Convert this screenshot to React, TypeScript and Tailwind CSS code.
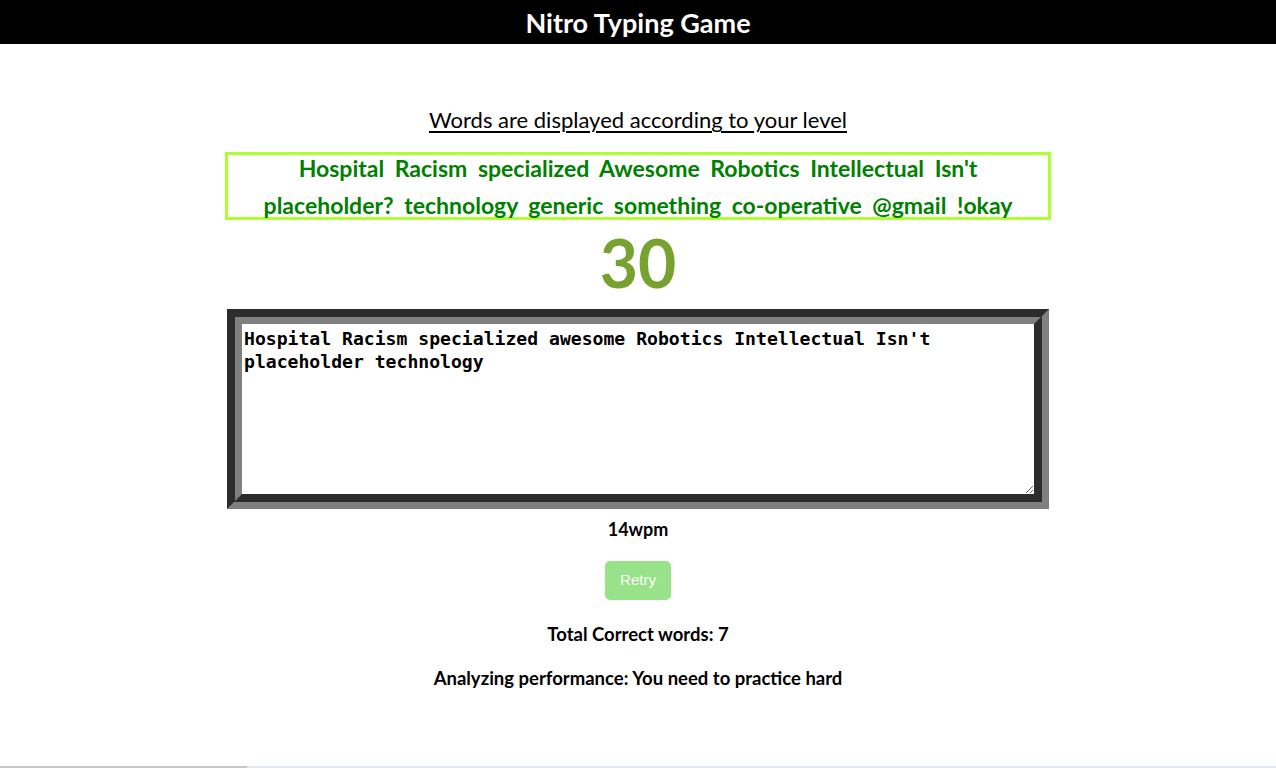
import { useState } from 'react';

const words =
  "Hospital Racism specialized Awesome Robotics Intellectual Isn't placeholder? technology generic something co-operative @gmail !okay";

export default function App() {
  const [typed, setTyped] = useState(
    "Hospital Racism specialized awesome Robotics Intellectual Isn't placeholder technology"
  );

  return (
    <div className="min-h-screen flex flex-col bg-white text-black font-['Lato','Open_Sans',sans-serif]">
      <header className="h-[44px] bg-black flex items-center justify-center">
        <h1 className="text-white text-[27px] font-bold leading-none">Nitro Typing Game</h1>
      </header>

      <main className="flex-1 flex flex-col items-center">
        <h2 className="mt-[63px] text-[22px] leading-[26px] underline underline-offset-[3px] decoration-[2px]">
          Words are displayed according to your level
        </h2>

        {/* word list overflows its fixed-height box a little, like the original */}
        <div className="mt-[19px] w-[826px] h-[68px] border-[3px] border-[#adff2f] px-[30px]">
          <p className="-mt-[5px] text-center text-[#008000] font-bold text-[23px] leading-[37px] [word-spacing:5px]">
            {words}
          </p>
        </div>

        <div className="mt-[3px] text-[#78a22f] font-bold text-[66px] leading-[80px]">30</div>

        <textarea
          value={typed}
          onChange={(e) => setTyped(e.target.value)}
          className="mt-[6px] w-[822px] h-[200px] border-[15px] [border-style:groove] border-[#808080] bg-white px-[2px] pt-[3px] pb-[2px] font-['DejaVu_Sans_Mono',monospace] font-bold text-[18.1px] leading-[23px] text-black outline-none"
        />

        <div className="mt-[10px] font-bold text-[18px] leading-[20px]">14wpm</div>

        <button
          type="button"
          className="mt-[22px] w-[66px] h-[39px] rounded-[5px] bg-[#98e38a] text-white text-[15px] font-['Liberation_Sans',Arial,sans-serif]"
        >
          Retry
        </button>

        <p className="mt-[24px] font-bold text-[18.5px] leading-[20px]">Total Correct words: 7</p>
        <p className="mt-[24px] font-bold text-[18.5px] leading-[20px]">
          Analyzing performance: You need to practice hard
        </p>
      </main>

      <footer className="h-[2px] flex">
        <div className="w-[247px] bg-[#c8c8c8]"></div>
        <div className="flex-1 bg-[#e2e8ef]"></div>
      </footer>
    </div>
  );
}
